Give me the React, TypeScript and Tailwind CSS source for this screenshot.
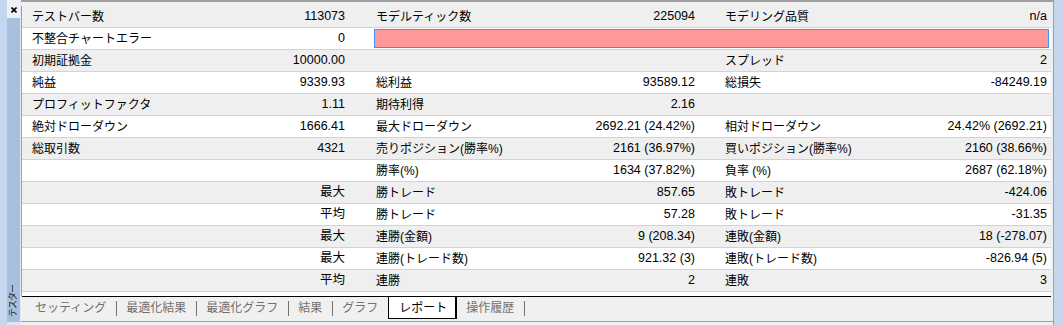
import React from 'react';

const rows: string[][] = [
  ['テストバー数', '113073', 'モデルティック数', '225094', 'モデリング品質', 'n/a'],
  ['不整合チャートエラー', '0', '', '', '', ''],
  ['初期証拠金', '10000.00', '', '', 'スプレッド', '2'],
  ['純益', '9339.93', '総利益', '93589.12', '総損失', '-84249.19'],
  ['プロフィットファクタ', '1.11', '期待利得', '2.16', '', ''],
  ['絶対ドローダウン', '1666.41', '最大ドローダウン', '2692.21 (24.42%)', '相対ドローダウン', '24.42% (2692.21)'],
  ['総取引数', '4321', '売りポジション(勝率%)', '2161 (36.97%)', '買いポジション(勝率%)', '2160 (38.66%)'],
  ['', '', '勝率(%)', '1634 (37.82%)', '負率 (%)', '2687 (62.18%)'],
  ['', '最大', '勝トレード', '857.65', '敗トレード', '-424.06'],
  ['', '平均', '勝トレード', '57.28', '敗トレード', '-31.35'],
  ['', '最大', '連勝(金額)', '9 (208.34)', '連敗(金額)', '18 (-278.07)'],
  ['', '最大', '連勝(トレード数)', '921.32 (3)', '連敗(トレード数)', '-826.94 (5)'],
  ['', '平均', '連勝', '2', '連敗', '3'],
];

const groupClasses = [
  'w-[348px] pl-[10px] pr-[25px]',
  'w-[349px] pl-[6px] pr-[24px]',
  'w-[332px] pl-[6px] pr-[4px]',
];

const tabs = [
  { name: 'セッティング' },
  { name: '最適化結果' },
  { name: '最適化グラフ' },
  { name: '結果' },
  { name: 'グラフ' },
  { name: 'レポート', active: true },
  { name: '操作履歴' },
];

function Group({ label, value, cls }: { label: string; value: string; cls: string }) {
  return (
    <div className={`flex items-center justify-between whitespace-nowrap ${cls}`}>
      <span>{label}</span>
      <span className="text-[12.5px]">{value}</span>
    </div>
  );
}

export default function App() {
  return (
    <div className="w-[1063px] h-[325px] bg-[#f0f0f0] flex overflow-hidden text-[12px] leading-none text-black font-['Liberation_Sans','Noto_Sans_CJK_JP',sans-serif]">
      {/* Tester dock side bar */}
      <div className="w-[21px] h-full flex">
        <div className="w-[7px] h-full bg-[#c4d7ee]" />
        <div className="w-[13px] h-full flex flex-col">
          <div className="h-[18px] bg-[#eef1f6] flex items-start justify-center pt-[7px]">
            <svg width="6" height="6" viewBox="0 0 6 6">
              <path d="M0.5 0.5L5.5 5.5M5.5 0.5L0.5 5.5" stroke="#000" strokeWidth="1.6" />
            </svg>
          </div>
          <div className="flex-1 bg-[#a8c0de] flex flex-col justify-end items-center pb-[5px]">
            <span className="[writing-mode:vertical-rl] [text-orientation:sideways] rotate-180 text-[9px] tracking-[-1px] text-[#1a1a1a]">
              テスター
            </span>
          </div>
          <div className="h-[3px] bg-[#dfe6ef]" />
        </div>
        <div className="w-px h-full bg-[#e4e9f0]" />
      </div>

      {/* Main report area */}
      <div className="w-[1032px] h-full flex flex-col">
        <div className="h-[2px] bg-[#a0a0a0]" />
        <div className="h-[4px]" />
        <div className="flex">
          <div className="w-[1030px] border-l border-[#a0a0a0] bg-white h-[290px]">
            {rows.map((r, i) => (
              <div
                key={i}
                className={`h-[22px] flex border-b border-[#d2d2d2] ${i % 2 === 0 ? 'bg-[#efefef]' : 'bg-white'}`}
              >
                <Group label={r[0]} value={r[1]} cls={groupClasses[0]} />
                {i === 1 ? (
                  <div className="w-[681px] pl-[4px] pr-[2px] flex items-center">
                    <div className="w-full h-[19px] bg-[#ff9999] border border-[#3399ff]" />
                  </div>
                ) : (
                  <>
                    <Group label={r[2]} value={r[3]} cls={groupClasses[1]} />
                    <Group label={r[4]} value={r[5]} cls={groupClasses[2]} />
                  </>
                )}
              </div>
            ))}
          </div>
          <div className="w-[2px]" />
        </div>

        {/* Bottom tabs */}
        <div className="h-px ml-[1px] mr-[2px] bg-black" />
        <div className="h-[24px] flex items-start pl-[5px]">
          {tabs.map((t, i) => {
            const next = tabs[i + 1];
            const sep = !t.active && !(next && next.active);
            return (
              <React.Fragment key={t.name}>
                {t.active ? (
                  <div className="h-[22px] pl-[10px] pr-[8px] flex items-center bg-white border-l border-r-2 border-b border-black text-black">
                    {t.name}
                  </div>
                ) : (
                  <div className="h-[22px] pl-[9px] pr-[10px] flex items-center text-[#707070]">{t.name}</div>
                )}
                {sep && <div className="w-px h-[15px] mt-[4px] bg-[#707070]" />}
              </React.Fragment>
            );
          })}
        </div>
        <div className="h-px bg-[#a0a0a0]" />
        <div className="flex-1" />
      </div>

      {/* Right frame */}
      <div className="w-px h-full bg-[#a0a0a0]" />
      <div className="flex-1 h-full bg-[#c4d7ee]" />
    </div>
  );
}
